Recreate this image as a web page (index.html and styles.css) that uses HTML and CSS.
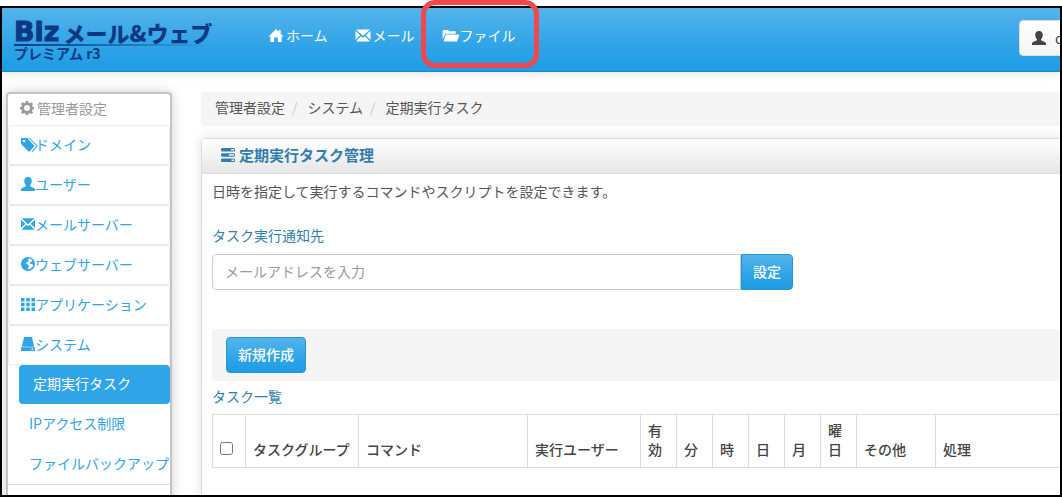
FILE: index.html
```html
<!DOCTYPE html>
<html lang="ja">
<head>
<meta charset="utf-8">
<title>定期実行タスク管理</title>
<link rel="stylesheet" href="styles.css">
</head>
<body>
<svg class="defs" aria-hidden="true">
  <symbol id="home" viewBox="0 0 16 16"><path d="M8 1 0 9h2v6h4v-5h4v5h4V9h2l-3-3V2h-2v2z"/></symbol>
  <symbol id="mail" viewBox="0 0 16 16"><path d="M.5 1.500h15L8 8.300zM0 3l5 4.800L0 12.700zM16 3v9.700l-5-4.900zM.5 14.500l5.500-5.700 2 1.900 2-1.900 5.500 5.700z"/></symbol>
  <symbol id="folder" viewBox="0 0 18 16"><path d="M0 12V3.500L1 2h5l1.500 1.500H14V6H3zM3.500 7H18l-2.500 7.500H1z"/></symbol>
  <symbol id="user" viewBox="0 0 16 16"><path d="M8 0c2.800 0 4.300 1.700 4.300 4.500 0 2.200-.9 3.800-1.900 4.900v1.200c1.200 1 5.100 1.500 5.600 3.400V16H0v-2c.5-1.900 4.400-2.400 5.600-3.400V9.400C4.600 8.300 3.700 6.700 3.700 4.500 3.700 1.700 5.200 0 8 0z"/></symbol>
  <symbol id="gear" viewBox="0 0 16 16"><path fill-rule="evenodd" d="M6.600 0h2.800l.4 2 1.500.6L13 1.400l1.900 1.900-1.200 1.800.6 1.500 1.700.3v2.600l-1.700.3-.6 1.500 1.200 1.700-1.900 1.900-1.700-1.200-1.500.6-.4 2H6.600l-.4-2-1.500-.6L3 14.900 1.100 13l1.200-1.700-.6-1.500L0 9.500V6.900l1.700-.3.600-1.500-1.200-1.800L3 1.400l1.700 1.200L6.200 2zM8 4.700a3.400 3.400 0 1 0 0 6.800 3.400 3.400 0 0 0 0-6.800z"/></symbol>
  <symbol id="tags" viewBox="0 0 18 16"><path fill-rule="evenodd" d="M0 1h6.500l8 8.500L8.500 16 0 7.500zM3.200 2.800a1.400 1.400 0 1 0 0 2.800 1.400 1.400 0 0 0 0-2.800z"/><path d="M8 1h1.300L18 9.500 12 16l-.8-.8 5.300-5.700z"/></symbol>
  <symbol id="globe" viewBox="0 0 16 16"><path fill-rule="evenodd" d="M8 0a8 8 0 1 1 0 16A8 8 0 0 1 8 0zM9 1.800 7.500 3.500l1.500 1L7 6 5 7l3 1.500 1 2-1.500 3.500c3.500 0 6-2 6.700-4.500l-2-1.500-2-.5.300-2 2-.5.500-1.200C12 2.800 10.500 2 9 1.800z"/></symbol>
  <symbol id="grid" viewBox="0 0 16 16"><path d="M0 1h4v4H0zM6 1h4v4H6zM12 1h4v4h-4zM0 6.500h4v4H0zM6 6.500h4v4H6zM12 6.500h4v4h-4zM0 12h4v4H0zM6 12h4v4H6zM12 12h4v4h-4z"/></symbol>
  <symbol id="drive" viewBox="0 0 16 16"><path d="M3.500 0h9L15 11H1z"/><path fill-rule="evenodd" d="M0 11.800h16V16H0zM12 13.200v1.300h2v-1.300z"/></symbol>
  <symbol id="tasks" viewBox="0 0 16 16"><path fill-rule="evenodd" d="M1 0h14l1 1v2l-1 1H1L0 3V1zM11.500 1.200v1.600H15V1.200zM1 6h14l1 1v2l-1 1H1L0 9V7zM9 7.200v1.600h6V7.200zM1 12h14l1 1v2l-1 1H1l-1-1v-2zM12 13.200v1.600h3v-1.600z"/></symbol>
</svg>
<div class="frame">
  <header class="navbar">
    <a class="brand" href="#">
      <span class="brand-main"><span class="brand-biz">Biz</span>メール&amp;ウェブ</span>
      <span class="brand-sub">プレミアム r3</span>
    </a>
    <nav class="menu">
      <a href="#"><svg class="icon"><use href="#home"/></svg>ホーム</a>
      <a href="#"><svg class="icon"><use href="#mail"/></svg>メール</a>
      <a class="menu-file" href="#"><svg class="icon icon-wide"><use href="#folder"/></svg>ファイル</a>
    </nav>
    <button class="account" type="button"><svg class="icon"><use href="#user"/></svg>c</button>
  </header>
  <div class="layout">
    <aside class="sidebar">
      <h2 class="side-title"><svg class="icon"><use href="#gear"/></svg>管理者設定</h2>
      <ul class="side-list">
        <li><a href="#"><svg class="icon icon-tags"><use href="#tags"/></svg>ドメイン</a></li>
        <li><a href="#"><svg class="icon"><use href="#user"/></svg>ユーザー</a></li>
        <li><a href="#"><svg class="icon"><use href="#mail"/></svg>メールサーバー</a></li>
        <li><a href="#"><svg class="icon"><use href="#globe"/></svg>ウェブサーバー</a></li>
        <li><a href="#"><svg class="icon"><use href="#grid"/></svg>アプリケーション</a></li>
        <li><a href="#"><svg class="icon"><use href="#drive"/></svg>システム</a></li>
      </ul>
      <ul class="sub-list">
        <li><a class="active" href="#">定期実行タスク</a></li>
        <li><a href="#">IPアクセス制限</a></li>
        <li><a href="#">ファイルバックアップ</a></li>
      </ul>
    </aside>
    <main class="main">
      <ol class="breadcrumb">
        <li>管理者設定</li>
        <li>システム</li>
        <li>定期実行タスク</li>
      </ol>
      <section class="panel">
        <h1 class="panel-title"><svg class="icon"><use href="#tasks"/></svg>定期実行タスク管理</h1>
        <div class="panel-body">
          <p class="lead">日時を指定して実行するコマンドやスクリプトを設定できます。</p>
          <label class="caption" for="notify">タスク実行通知先</label>
          <div class="input-group">
            <input id="notify" type="email" placeholder="メールアドレスを入力">
            <button class="btn" type="button">設定</button>
          </div>
          <div class="toolbar"><button class="btn" type="button">新規作成</button></div>
          <h2 class="caption">タスク一覧</h2>
          <table class="tasks">
            <colgroup><col class="c-check"><col class="c-group"><col class="c-command"><col class="c-group"><col class="c-unit"><col class="c-unit"><col class="c-unit"><col class="c-unit"><col class="c-unit"><col class="c-unit"><col class="c-other"><col></colgroup>
            <thead>
              <tr>
                <th><input type="checkbox" aria-label="すべて選択"></th>
                <th>タスクグループ</th><th>コマンド</th><th>実行ユーザー</th>
                <th>有効</th><th>分</th><th>時</th><th>日</th><th>月</th><th>曜日</th>
                <th>その他</th><th>処理</th>
              </tr>
            </thead>
          </table>
        </div>
      </section>
    </main>
  </div>
</div>
<div class="highlight"></div>
</body>
</html>
```
FILE: styles.css
```css
* { box-sizing: border-box; }
body {
  margin: 0;
  padding-top: 6px;
  height: 100vh;
  overflow: hidden;
  background: #fff;
  color: #555;
  font: 14px/20px "Noto Sans CJK JP", "Noto Sans", sans-serif;
}
h1, h2, p, ul, ol { margin: 0; padding: 0; font-size: 14px; font-weight: 400; }
ul, ol { list-style: none; }
a { color: #2fa4e7; text-decoration: none; }
button, input { font: inherit; }
.defs { position: absolute; width: 0; height: 0; }
.icon { width: 14px; height: 14px; flex: none; fill: currentColor; }

.frame {
  display: flex;
  flex-direction: column;
  height: 100%;
  overflow: hidden;
  border: 2px solid #000;
}
.highlight {
  position: absolute;
  top: 0;
  left: 421px;
  width: 118px;
  height: 68px;
  border: 5px solid #f0484e;
  border-radius: 14px;
}

/* navbar */
.navbar {
  display: flex;
  flex: none;
  height: 64px;
  padding-left: 12px;
  background: linear-gradient(#54b4eb, #2fa4e7 60%, #1d9ce5);
  border-bottom: 1px solid #178acc;
  box-shadow: 0 1px 10px rgba(0, 0, 0, .12);
}
.brand {
  display: flex;
  flex-direction: column;
  width: 254px;
  padding-top: 12px;
  color: #0b3a82;
  white-space: nowrap;
}
.brand-main {
  display: flex;
  align-items: center;
  width: 200px;
  height: 26px;
  font-size: 22px;
  font-weight: 900;
  border-bottom: 2px solid;
  border-image: linear-gradient(90deg, #0b3a82, transparent) 1;
}
.brand-biz {
  margin-right: 4px;
  font: 700 27px/26px "DejaVu Sans", sans-serif;
  -webkit-text-stroke: 1px #0b3a82;
}
.brand-sub { font-weight: 700; line-height: 14px; }
.menu { display: flex; gap: 27px; height: 54px; }
.menu a { display: flex; align-items: center; gap: 2px; color: #fff; }
.menu .icon { width: 16px; height: 15px; }
.menu .icon-wide { width: 18px; }
.menu .menu-file { gap: 0; }
.account {
  display: flex;
  align-items: center;
  gap: 9px;
  width: 60px;
  height: 36px;
  margin: 12px -19px 0 auto;
  padding: 0 12px;
  color: #444;
  background: linear-gradient(#fff, #f4f4f4);
  border: 1px solid #ddd;
  border-radius: 4px;
}

/* page columns */
.layout {
  display: grid;
  grid-template-columns: 166px minmax(0, 1fr);
  gap: 29px;
  flex: 1;
  min-height: 0;
  padding: 20px 0 0 4px;
}
.sidebar {
  height: 480px;
  border: 2px solid #c4c4c4;
  border-radius: 4px;
  box-shadow: 0 0 12px rgba(0, 0, 0, .2);
  white-space: nowrap;
}
.side-title {
  display: flex;
  align-items: center;
  gap: 3px;
  height: 31px;
  padding: 0 0 4px 12px;
  color: #999;
}
.side-list li { height: 40px; border: 1px solid #eee; border-radius: 3px; }
.side-list a { display: flex; align-items: center; height: 36px; padding-left: 12px; }
.side-list li + li { border-top-color: #e6e6e6; }
.icon-tags { width: 17px; height: 15px; margin-right: -3px; }
.sub-list { padding-left: 11px; border-bottom: 1px solid #ddd; }
.sub-list a { display: block; height: 40px; padding: 9px 0 9px 10px; }
.sub-list .active {
  height: 39px;
  padding: 8px 0 8px 14px;
  color: #fff;
  background: #2fa4e7;
  border-radius: 4px;
}

/* content */
.main { margin-right: -12px; }
.breadcrumb {
  display: flex;
  height: 34px;
  padding: 5px 14px;
  background: #f5f5f5;
  border-radius: 4px;
}
.breadcrumb li + li::before { content: "/"; padding: 0 10px 0 7px; color: #ccc; }
.panel {
  height: 400px;
  margin-top: 12px;
  border: 1px solid #ddd;
  border-radius: 4px;
  box-shadow: 0 0 12px rgba(0, 0, 0, .12);
}
.panel-title {
  display: flex;
  align-items: center;
  gap: 3px;
  height: 35px;
  padding: 0 0 2px 18px;
  color: #317eac;
  font-size: 15px;
  font-weight: 700;
  background: linear-gradient(#fff, #e6e6e6);
  border-bottom: 1px solid #ddd;
}
.panel-title .icon { width: 16px; }
.panel-body { padding: 7px 10px; }
.caption { display: block; color: #317eac; }
.lead { margin-bottom: 24px; }
.input-group { display: flex; max-width: 581px; margin: 9px 0 39px; }
.input-group input {
  flex: 1;
  min-width: 0;
  height: 36px;
  padding: 0 12px 2px;
  border: 1px solid #ccc;
  border-radius: 4px 0 0 4px;
}
.input-group input::placeholder { color: #999; }
.btn {
  height: 36px;
  padding: 0 11px 2px;
  color: #fff;
  font-weight: 500;
  background: linear-gradient(#54b4eb, #2fa4e7 60%, #1d9ce5);
  border: 1px solid #2295d8;
  border-radius: 4px;
}
.input-group .btn { border-radius: 0 4px 4px 0; }
.toolbar { margin-bottom: 5px; padding: 8px 14px; background: #f5f5f5; border-radius: 4px; }
.tasks {
  width: 100%;
  margin-top: 8px;
  table-layout: fixed;
  border-collapse: collapse;
  color: #444;
}
.tasks th {
  height: 53px;
  padding: 6px 7px 8px;
  border: 1px solid #ddd;
  font-weight: 500;
  line-height: 19px;
  text-align: left;
  vertical-align: bottom;
}
.tasks input { display: block; width: 13px; height: 13px; margin: 0 0 4px; }
.c-check { width: 33px; }
.c-group { width: 113px; }
.c-command { width: 169px; }
.c-unit { width: 36px; }
.c-other { width: 79px; }
```
